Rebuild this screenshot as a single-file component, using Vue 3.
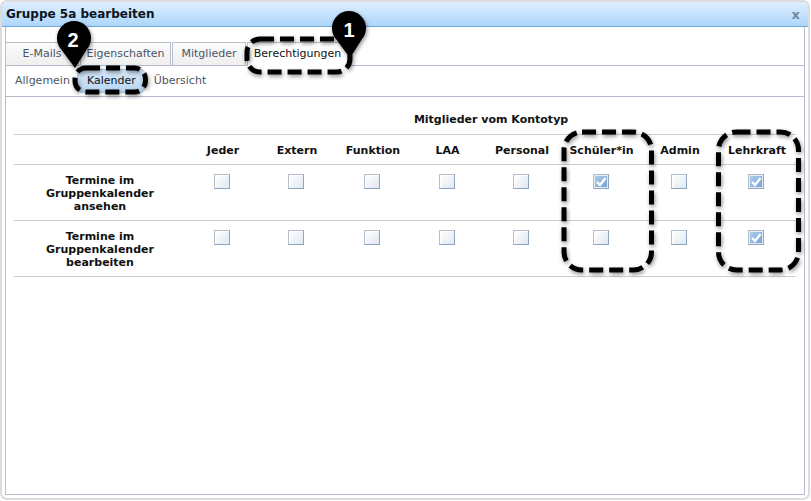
<script setup>
const columns = [
  { label: 'Jeder', width: 74 },
  { label: 'Extern', width: 74 },
  { label: 'Funktion', width: 78 },
  { label: 'LAA', width: 71 },
  { label: 'Personal', width: 78 },
  { label: 'Schüler*in', width: 81 },
  { label: 'Admin', width: 76 },
  { label: 'Lehrkraft', width: 78 },
]

const rows = [
  { label: 'Termine im Gruppenkalender ansehen', checked: [5, 7] },
  { label: 'Termine im Gruppenkalender bearbeiten', checked: [7] },
]

const tabs = ['E-Mails', 'Eigenschaften', 'Mitglieder', 'Berechtigungen']
const subTabs = ['Allgemein', 'Kalender', 'Übersicht']

// dashed marks laid over the screenshot
const marks = [
  { x: 247, y: 39, w: 103, h: 33, r: 13 },
  { x: 75, y: 68, w: 70.5, h: 24, r: 11 },
  { x: 564, y: 132, w: 87.5, h: 138, r: 18 },
  { x: 718.5, y: 132, w: 80, h: 138, r: 18 },
]
</script>

<template>
  <div class="page">
    <div class="window">
      <div class="titlebar">
        <span class="title">Gruppe 5a bearbeiten</span>
        <span class="close">x</span>
      </div>
      <div class="body">
        <div class="tabs">
          <div v-for="t in tabs" :key="t" class="tab" :class="{ active: t === 'Berechtigungen' }">{{ t }}</div>
        </div>
        <div class="subtabs">
          <div v-for="s in subTabs" :key="s" class="subtab" :class="{ active: s === 'Kalender' }">{{ s }}</div>
        </div>
        <div class="content">
          <table class="perms">
            <colgroup>
              <col class="label-col">
              <col v-for="c in columns" :key="c.label" :style="{ width: c.width + 'px' }">
            </colgroup>
            <thead>
              <tr class="group-row">
                <th></th>
                <th :colspan="columns.length">Mitglieder vom Kontotyp</th>
              </tr>
              <tr class="head-row">
                <th></th>
                <th v-for="c in columns" :key="c.label">{{ c.label }}</th>
              </tr>
            </thead>
            <tbody>
              <tr v-for="r in rows" :key="r.label">
                <th class="row-label">{{ r.label }}</th>
                <td v-for="(c, i) in columns" :key="c.label">
                  <span class="check" :class="{ on: r.checked.includes(i) }">
                    <svg v-if="r.checked.includes(i)" viewBox="0 0 12 11" width="12" height="11">
                      <path d="M2 6 L5 9 L10.5 2" fill="none" stroke="#fff" stroke-width="2.4" />
                    </svg>
                  </span>
                </td>
              </tr>
            </tbody>
          </table>
        </div>
      </div>
    </div>

    <svg class="marks" width="811" height="501" viewBox="0 0 811 501">
      <defs>
        <filter id="shadow" x="-20%" y="-20%" width="140%" height="140%">
          <feGaussianBlur in="SourceAlpha" stdDeviation="2" />
          <feOffset dx="1" dy="2" />
          <feComponentTransfer><feFuncA type="linear" slope="0.45" /></feComponentTransfer>
          <feMerge><feMergeNode /><feMergeNode in="SourceGraphic" /></feMerge>
        </filter>
      </defs>
      <g filter="url(#shadow)">
        <rect v-for="m in marks" :key="m.x" :x="m.x" :y="m.y" :width="m.w" :height="m.h" :rx="m.r"
          fill="none" stroke="#000" stroke-width="5" stroke-dasharray="14 6" />
        <path d="M350 58 L336 39 A17 17 0 1 1 362 39 Z" />
        <path d="M75 68 L61 49 A17 17 0 1 1 87 49 Z" />
      </g>
      <text x="349" y="37" class="pin">1</text>
      <text x="73" y="47" class="pin">2</text>
    </svg>
  </div>
</template>

<style>
html, body {
  margin: 0;
  background: #fff;
}
</style>

<style scoped>
.page {
  position: relative;
  width: 811px;
  height: 501px;
  overflow: hidden;
  background: #fff;
  font-family: "DejaVu Sans", Verdana, sans-serif;
  font-size: 11px;
  color: #111;
}
.window {
  box-sizing: border-box;
  width: 810px;
  height: 500px;
  display: flex;
  flex-direction: column;
  border: 2px solid #dcdcdc;
  border-radius: 7px;
  overflow: hidden;
}
.titlebar {
  flex: none;
  box-sizing: border-box;
  height: 25px;
  padding: 0 8px 0 4px;
  display: flex;
  align-items: center;
  justify-content: space-between;
  background: linear-gradient(#deeeff, #add6fb);
  border-bottom: 1px solid #6fa6d8;
}
.title {
  font-size: 12px;
  font-weight: bold;
  color: #0c1420;
}
.close {
  font-size: 13px;
  font-weight: bold;
  color: #7488a1;
}
.body {
  flex: 1;
  display: flex;
  flex-direction: column;
  box-sizing: border-box;
  margin: 0 3px 3px 3px;
  padding-top: 15px;
  border: solid #b4bccb;
  border-width: 0 1px 1px 1px;
}
.tabs {
  flex: none;
  display: flex;
  gap: 1px;
  height: 24px;
  box-sizing: border-box;
  margin-left: -1px;
  border-bottom: 1px solid #b4bccb;
}
.tab {
  box-sizing: border-box;
  height: 23px;
  line-height: 22px;
  text-align: center;
  color: #4a5564;
  background: linear-gradient(#fbfbfb, #efefef);
  border: 1px solid #b9c0cc;
  border-bottom: 0;
}
.tab:nth-child(1) { width: 74px; }
.tab:nth-child(2) { width: 91px; }
.tab:nth-child(3) { width: 74px; }
.tab:nth-child(4) { width: 101px; }
.tab.active {
  height: 24px;
  background: #fff;
  color: #111;
}
.subtabs {
  flex: none;
  display: flex;
  align-items: center;
  gap: 2px;
  height: 31px;
  box-sizing: border-box;
  padding: 0 4px 1px 4px;
  border-bottom: 1px solid #b4bccb;
}
.subtab {
  padding: 0 5px;
  line-height: 22px;
  color: #4a5564;
}
.subtab.active {
  box-sizing: border-box;
  margin-right: 1px;
  padding: 0 9px;
  color: #111;
  border: 1px solid #a9c9e8;
  border-radius: 6px;
  background: linear-gradient(#d6e8fa, #b8d6f3);
}
.content {
  flex: 1;
  padding: 8px 8px 0 8px;
}
.perms {
  width: 782px;
  table-layout: fixed;
  border-collapse: collapse;
}
.label-col {
  width: 172px;
}
.perms th {
  font-weight: bold;
  text-align: center;
  padding: 0;
}
.group-row th {
  height: 29px;
}
.head-row th {
  height: 28px;
  padding-top: 1px;
  border-top: 1px solid #ccc;
  border-bottom: 1px solid #ccc;
}
.perms tbody tr {
  height: 56px;
  border-bottom: 1px solid #ccc;
}
.perms .row-label {
  box-sizing: border-box;
  padding: 9px 30px 0 30px;
  line-height: 13px;
  vertical-align: top;
}
.perms td {
  padding: 9px 0 0;
  text-align: center;
  vertical-align: top;
}
.check {
  display: inline-flex;
  align-items: center;
  justify-content: center;
  box-sizing: border-box;
  width: 16px;
  height: 15px;
  margin-right: 2px;
  border: 1px solid #b3bdcb;
  border-right-color: #8fa5bf;
  border-bottom-color: #8fa5bf;
  background: linear-gradient(135deg, #fff, #dfe8f2);
  box-shadow: inset 1px 1px 0 #fff;
}
.check.on {
  background: linear-gradient(135deg, #b5d0ea, #6f9fd0);
  box-shadow: inset 0 0 0 1px #e6edf5;
}
.marks {
  position: absolute;
  left: 0;
  top: 0;
}
.pin {
  fill: #fff;
  font-family: "Liberation Sans", Arial, sans-serif;
  font-size: 20px;
  font-weight: bold;
  text-anchor: middle;
}
</style>
